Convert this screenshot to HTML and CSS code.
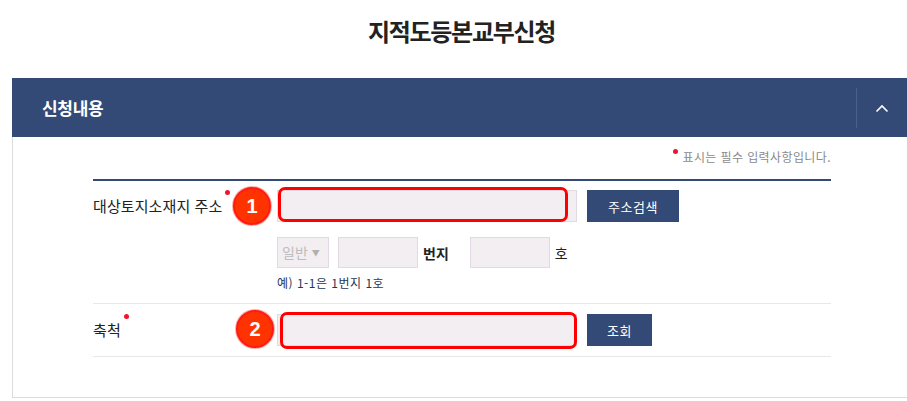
FILE: index.html
```html
<!DOCTYPE html>
<html lang="ko">
<head>
<meta charset="utf-8">
<title>지적도등본교부신청</title>
<link rel="stylesheet" href="styles.css">
</head>
<body>
<div class="wrap">
  <h1 class="title">지적도등본교부신청</h1>
  <section class="panel">
    <div class="panel-head">
      <h2 class="panel-title">신청내용</h2>
      <div class="toggle">
        <svg width="14" height="9" viewBox="0 0 14 9" aria-hidden="true"><polyline points="1.5,7.5 7,2 12.5,7.5" fill="none" stroke="#ffffff" stroke-width="1.6"/></svg>
      </div>
    </div>
    <div class="panel-body">
      <p class="req-note"><span class="req-dot"></span>표시는 필수 입력사항입니다.</p>
      <div class="form">
        <div class="row row-addr">
          <div class="label">대상토지소재지 주소<span class="dot"></span></div>
          <div class="field">
            <div class="line">
              <div class="input-wrap">
                <input class="inp inp-wide" type="text">
                <span class="mark mark-1"></span>
              </div>
              <button class="btn btn-search" type="button">주소검색</button>
            </div>
            <div class="line line-sub">
              <div class="select">일반<span class="caret">▼</span></div>
              <input class="inp inp-small" type="text">
              <span class="unit unit-bold">번지</span>
              <input class="inp inp-small" type="text">
              <span class="unit">호</span>
            </div>
            <p class="example">예) 1-1은 1번지 1호</p>
          </div>
          <span class="badge badge-1">1</span>
        </div>
        <div class="row row-scale">
          <div class="label">축척<span class="dot"></span></div>
          <div class="field">
            <div class="line">
              <div class="input-wrap">
                <input class="inp inp-wide" type="text">
                <span class="mark mark-2"></span>
              </div>
              <button class="btn btn-view" type="button">조회</button>
            </div>
          </div>
          <span class="badge badge-2">2</span>
        </div>
      </div>
    </div>
  </section>
</div>
</body>
</html>
```

FILE: styles.css
```css
html, body {
  margin: 0;
  padding: 0;
  background: #ffffff;
  overflow: hidden;
}
body {
  font-family: "Noto Sans CJK KR", "Noto Sans", sans-serif;
  color: #222222;
}
.wrap {
  margin-left: 12px;
  width: 899px;
}
.title {
  margin: 0;
  height: 78px;
  box-sizing: border-box;
  padding-top: 15px;
  font-size: 24px;
  line-height: 32px;
  font-weight: 700;
  letter-spacing: -1.3px;
  text-align: center;
  color: #222222;
}
.panel-head {
  height: 59px;
  background: #334a76;
  display: flex;
  align-items: center;
  justify-content: space-between;
  padding-left: 30px;
}
.panel-title {
  margin: 0;
  color: #ffffff;
  font-size: 17px;
  font-weight: 700;
  letter-spacing: -0.3px;
  line-height: 24px;
}
.toggle {
  width: 54px;
  height: 40px;
  border-left: 1px solid #4b6189;
  display: flex;
  align-items: center;
  justify-content: center;
}
.toggle svg {
  margin-top: 2px;
  margin-right: 5px;
}
.panel-body {
  border-left: 1px solid #dcdcdc;
  border-bottom: 1px solid #dcdcdc;
  padding: 11px 80px 40px 80px;
}
.req-note {
  margin: 0;
  height: 18px;
  line-height: 18px;
  font-size: 12px;
  letter-spacing: 0.4px;
  color: #8a8a8a;
  text-align: right;
  position: relative;
}
.req-dot {
  display: inline-block;
  width: 5px;
  height: 5px;
  border-radius: 50%;
  background: #f0142e;
  vertical-align: top;
  margin-top: 1px;
  margin-right: 4px;
}
.form {
  margin-top: 13px;
  border-top: 2px solid #334a76;
}
.row {
  position: relative;
  display: flex;
  border-bottom: 1px solid #e8e8e8;
}
.row-addr {
  padding: 9px 0 11px;
}
.row-scale {
  padding: 10px 0 10px;
}
.label {
  width: 184px;
  flex: none;
  font-size: 15px;
  line-height: 32px;
  letter-spacing: 0.1px;
  color: #222222;
  position: relative;
}
.dot {
  display: inline-block;
  width: 5px;
  height: 5px;
  border-radius: 50%;
  background: #f0142e;
  vertical-align: top;
  margin-left: 3px;
  margin-top: 0px;
}
.field {
  display: flex;
  flex-direction: column;
}
.line {
  display: flex;
  align-items: center;
}
.input-wrap {
  position: relative;
}
.inp {
  display: block;
  box-sizing: border-box;
  margin: 0;
  padding: 0 6px;
  border: 1px solid #e2dae2;
  background: #f2eef2;
  font: inherit;
  outline: none;
}
.inp-wide {
  width: 300px;
  height: 32px;
}
.inp-small {
  width: 80px;
  height: 31px;
}
.mark {
  position: absolute;
  border: 3px solid #ff0000;
  border-radius: 7px;
  box-sizing: border-box;
  pointer-events: none;
}
.mark-1 {
  left: 1px;
  top: -3px;
  width: 290px;
  height: 35px;
}
.mark-2 {
  left: 3px;
  top: -2px;
  width: 297px;
  height: 37px;
}
.btn {
  margin: 0 0 0 10px;
  height: 32px;
  border: 0;
  background: #334a76;
  color: #ffffff;
  font-family: inherit;
  font-size: 13px;
  letter-spacing: 0.5px;
  padding: 0;
  cursor: pointer;
}
.btn-search {
  width: 92px;
}
.btn-view {
  width: 65px;
}
.line-sub {
  margin-top: 15px;
}
.select {
  box-sizing: border-box;
  width: 52px;
  height: 31px;
  border: 1px solid #e2dae2;
  background: #f2eef2;
  color: #bdbdbd;
  font-size: 14px;
  line-height: 29px;
  padding-left: 4px;
  margin-right: 9px;
}
.caret {
  font-size: 8px;
  margin-left: 4px;
  vertical-align: 2px;
  color: #b0b0b0;
}
.unit {
  font-size: 14px;
  color: #222222;
  margin: 0 13px 0 5px;
}
.unit-bold {
  font-weight: 700;
  margin-right: 21px;
}
.example {
  margin: 6px 0 0;
  font-size: 12px;
  line-height: 18px;
  color: #26365a;
  letter-spacing: 0.5px;
}
.badge {
  position: absolute;
  top: 6px;
  width: 38px;
  height: 38px;
  box-sizing: border-box;
  border-radius: 50%;
  background: #ff3300;
  border: 2px solid #ff1a1a;
  box-shadow: 0 0 0 1px #ffb0a0;
  color: #ffffff;
  font-family: "Liberation Sans", Arial, sans-serif;
  font-weight: 700;
  font-size: 20px;
  line-height: 34px;
  text-align: center;
}
.badge-1 {
  left: 140px;
}
.badge-2 {
  left: 143px;
}
```
